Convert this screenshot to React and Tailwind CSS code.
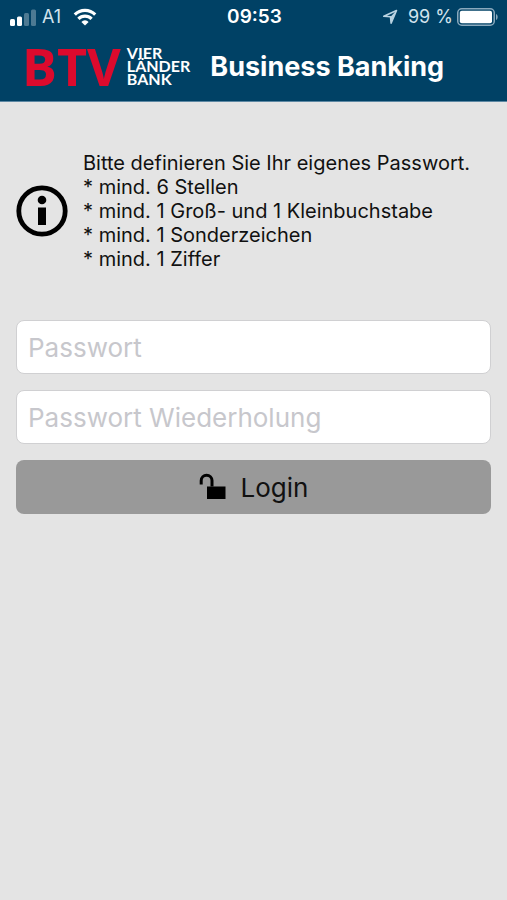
const RULES = [
  "mind. 6 Stellen",
  "mind. 1 Groß- und 1 Kleinbuchstabe",
  "mind. 1 Sonderzeichen",
  "mind. 1 Ziffer",
];

/* ── Status bar icons ── */
function SignalIcon() {
  return (
    <svg viewBox="0 0 28 18" className="h-[18px] w-7" fill="#fff" aria-hidden="true">
      <rect x="0" y="11" width="5" height="7" rx="1.5" />
      <rect x="7" y="8.5" width="5" height="9.5" rx="1.5" />
      <rect x="14" y="5" width="5" height="13" rx="1.5" opacity="0.3" />
      <rect x="21" y="1.5" width="5" height="16.5" rx="1.5" opacity="0.3" />
    </svg>
  );
}

function WifiIcon() {
  return (
    <svg viewBox="0 0 24 18" className="h-[18px] w-6" fill="none" stroke="#fff" strokeWidth="3.2" aria-hidden="true">
      <path d="M1.8 6.6a14.4 14.4 0 0 1 20.4 0" />
      <path d="M5.4 10.8a9.3 9.3 0 0 1 13.2 0" />
      <path d="M12 17.4 8.4 13.9a5 5 0 0 1 7.2 0z" fill="#fff" stroke="none" />
    </svg>
  );
}

function LocationIcon() {
  return (
    <svg viewBox="0 0 16 16" className="h-4 w-4" fill="none" stroke="#b9d3e2" strokeWidth="1.6" strokeLinejoin="round" aria-hidden="true">
      <path d="M14.5 1.5 1.8 7.3l6.7.4.6 6.6z" />
      <path d="M14.5 1.5 9.1 14.3l-.6-6.6z" fill="#b9d3e2" stroke="none" />
    </svg>
  );
}

function BatteryIcon() {
  return (
    <svg viewBox="0 0 42 18" className="h-[18px] w-[42px]" aria-hidden="true">
      <rect x="0.75" y="0.75" width="36.5" height="16.5" rx="4" fill="none" stroke="#8aa9bd" strokeWidth="1.5" />
      <rect x="2.8" y="2.8" width="32.2" height="12.4" rx="2" fill="#fff" />
      <path d="M39 6c2.2.7 2.2 5.3 0 6z" fill="#8aa9bd" />
    </svg>
  );
}

/* ── Content icons ── */
function InfoIcon() {
  return (
    <svg viewBox="0 0 52 52" className="h-[52px] w-[52px] shrink-0" aria-hidden="true">
      <circle cx="26" cy="26" r="23.2" fill="none" stroke="#000" strokeWidth="4.8" />
      <circle cx="26" cy="15" r="4.3" />
      <rect x="22" y="22.5" width="8" height="17.5" />
    </svg>
  );
}

function UnlockIcon() {
  return (
    <svg viewBox="0 0 28 28" className="h-7 w-7" aria-hidden="true">
      <rect x="8" y="13.5" width="18.5" height="12.5" />
      <path d="M2.2 11.4V7.6a5.4 5.4 0 0 1 10.8 0v5.9" fill="none" stroke="#000" strokeWidth="3" />
    </svg>
  );
}

function StatusBar() {
  return (
    <div className="grid h-[34px] grid-cols-[1fr_auto_1fr] items-center pl-2.5 pr-2 text-lg text-[#d3e4ee]">
      <div className="flex items-center">
        <SignalIcon />
        <span className="ml-1 mr-3">A1</span>
        <WifiIcon />
      </div>
      <time className="text-[19px] font-semibold text-white">09:53</time>
      <div className="flex items-center justify-end">
        <LocationIcon />
        <span className="ml-2.5 mr-1">99 %</span>
        <BatteryIcon />
      </div>
    </div>
  );
}

function Logo() {
  return (
    <div className="flex items-center pb-1">
      <span className="font-['Open_Sans',sans-serif] text-[52px] font-bold leading-[52px] text-[#dc0a2d]">BTV</span>
      <span className="ml-1.5 font-['Lato',sans-serif] text-base font-bold leading-[13px] text-white">
        VIER
        <br />
        LÄNDER
        <br />
        BANK
      </span>
    </div>
  );
}

function PasswordField({ name, label }) {
  return (
    <input
      name={name}
      type="password"
      aria-label={label}
      placeholder={label}
      className="mb-4 block h-[54px] w-full rounded-lg border border-[#d0d0d2] bg-white px-[11px] text-[26px] text-black placeholder:text-[#c7c7cc] focus:outline-none"
    />
  );
}

export default function App() {
  return (
    <div className="min-h-screen bg-[#e4e4e4] font-['Inter',sans-serif] text-black">
      <header className="border-b border-[#5d88a3] bg-[#004165]">
        <StatusBar />
        <div className="flex h-[67px] items-center pl-[22px]">
          <Logo />
          <h1 className="ml-5 text-[27px] font-bold text-white">Business Banking</h1>
        </div>
      </header>

      <main className="px-4 pt-[49px]">
        <section className="flex items-center gap-[15px] text-xl leading-6 text-[#111]">
          <InfoIcon />
          <div>
            <p>Bitte definieren Sie Ihr eigenes Passwort.</p>
            <ul>
              {RULES.map((rule) => (
                <li key={rule}>* {rule}</li>
              ))}
            </ul>
          </div>
        </section>

        <form className="mt-[49px]" onSubmit={(e) => e.preventDefault()}>
          <PasswordField name="password" label="Passwort" />
          <PasswordField name="passwordRepeat" label="Passwort Wiederholung" />
          <button
            type="submit"
            className="flex h-[54px] w-full items-center justify-center gap-3.5 rounded-lg bg-[#999] text-[26px] text-[#111]"
          >
            <UnlockIcon />
            Login
          </button>
        </form>
      </main>
    </div>
  );
}
